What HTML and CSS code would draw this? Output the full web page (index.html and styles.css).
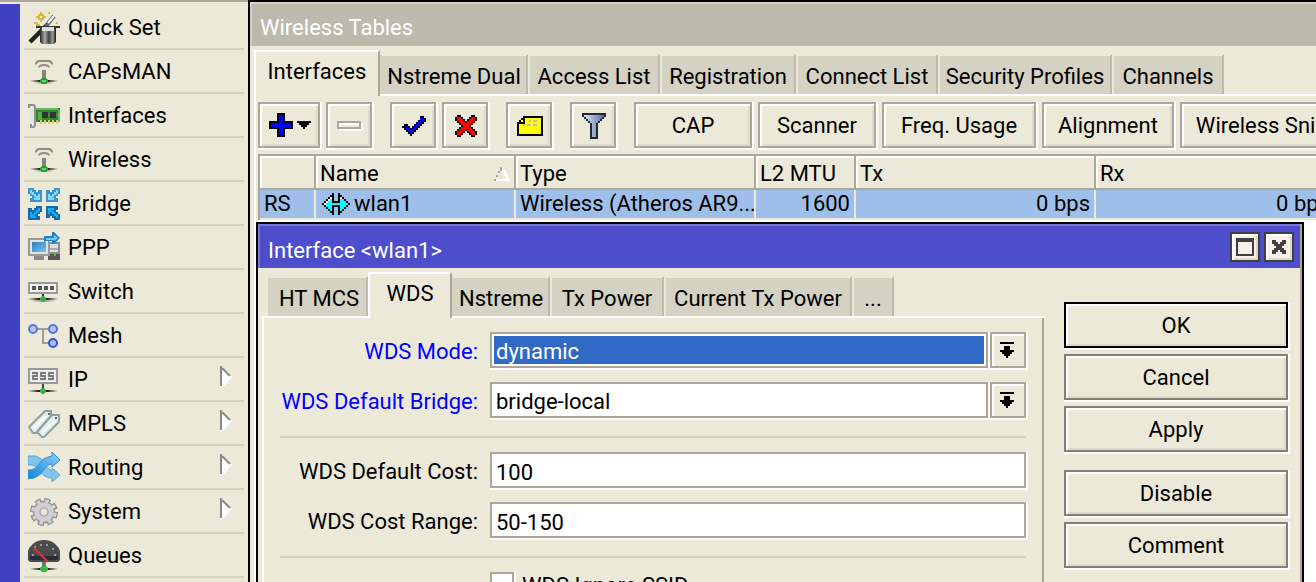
FILE: index.html
```html
<!DOCTYPE html>
<html lang="en">
<head>
<meta charset="utf-8">
<title>Wireless Tables</title>
<link rel="stylesheet" href="styles.css">
</head>
<body>
<svg class="defs" width="0" height="0" aria-hidden="true">
  <defs>
    <linearGradient id="screen" x1="0" y1="0" x2="1" y2="1"><stop offset="0" stop-color="#2a7fc4"/><stop offset="1" stop-color="#7cc0f0"/></linearGradient>
    <linearGradient id="steel" x1="0" y1="0" x2="1" y2="0"><stop offset="0" stop-color="#222"/><stop offset=".3" stop-color="#aaa"/><stop offset=".55" stop-color="#444"/><stop offset=".8" stop-color="#999"/><stop offset="1" stop-color="#111"/></linearGradient>
    <linearGradient id="fade" x1="0" y1="0" x2="1" y2="0"><stop offset="0" stop-color="#222" stop-opacity="0"/><stop offset=".35" stop-color="#222"/><stop offset=".65" stop-color="#222"/><stop offset="1" stop-color="#222" stop-opacity="0"/></linearGradient>
    <linearGradient id="funnel" x1="0" y1="0" x2="1" y2="0"><stop offset="0" stop-color="#dde4f4"/><stop offset="1" stop-color="#5c6c9c"/></linearGradient>
    <linearGradient id="sky" x1="0" y1="1" x2="1" y2="0"><stop offset="0" stop-color="#0c86e0"/><stop offset="1" stop-color="#8cd0fa"/></linearGradient>
    <symbol id="i-antenna" viewBox="0 0 16 16"><path d="M4 4.200Q4 2.600 6 2.500H10Q12 2.600 12 4.200M5.500 5.800Q5.500 4.500 8 4.500T10.500 5.800" fill="none" stroke="#8e8c84"/><path d="M7 7h2v5H7z" fill="#85837b"/><path d="M1 12h14v1H1z" fill="url(#fade)"/><path d="M3 13h10v1H3z" fill="url(#fade)" opacity=".3"/><path d="M7 11h2l1 1v1l-1 1H7l-1-1v-1z" fill="#2c9a3a"/><path d="M7 12h2v1H7z" fill="#4be75a"/></symbol>
    <symbol id="i-arrow" viewBox="0 0 7 7"><path d="M0 0h3v1h1v1h1V1h2v6H1V5h1V4H1V3H0z" fill="#3f92cf"/><path d="M1 1h1v1h1v1h1v1h1V3h1v3H3V5h1L3 4 1 2.500z" fill="#7fdcff"/></symbol>
    <symbol id="i-arrow-deep" viewBox="0 0 7 7"><path d="M0 0h3v1h1v1h1V1h2v6H1V5h1V4H1V3H0z" fill="#176aa8"/><path d="M1 1h1v1h1v1h1v1h1V3h1v3H3V5h1L3 4 1 2.500z" fill="#16adf5"/></symbol>
    <symbol id="i-drop" viewBox="0 0 7 8"><path d="M0 0h7v1H0zM2 2h3v2h2v1H6v1H5v1H4v1H3V7H2V6H1V5H0V4h2z"/></symbol>
  </defs>
</svg>
<div class="desktop">
  <div class="rail"></div>
  <nav class="menu" aria-label="Main menu">
    <a class="item" href="#"><svg viewBox="0 0 16 16"><path d="M1 15 9 7" stroke="#222" stroke-width="2.200"/><path d="m9 7 4-5" stroke="#666" stroke-width="2.200"/><path d="m10 5.500 3-3.500" stroke="#fff"/><path d="M6 8h8v7l-1 1H7l-1-1z" fill="url(#steel)"/><path d="M4 7h12v1H4z" fill="#333"/><path d="M7 7.500h6v2H7z" fill="#ddd"/><path d="M6 0h1v1h1v1h1v1H8v1H7v1H6V4H5V3H4V2h1V1h1zM4 5h1v1h1v1H4V6H3V5zM10 0h1v1h-1zM14 5h1v1h-1z" fill="#d9b93b"/><path d="M6 2h1v1H6z" fill="#fff5a0"/></svg>Quick Set</a>
    <a class="item" href="#"><svg><use href="#i-antenna"/></svg>CAPsMAN</a>
    <a class="item" href="#"><svg viewBox="0 0 16 16"><path d="M0 2h3l1 1v10l-1 1H1V4H0z" fill="#8f8f8f"/><path d="M1 3h1v9H1zM2 3h1v10H2z" fill="#e4e4e4"/><path d="M4 4h12v7H4z" fill="#2d8b2d"/><path d="M4 4h11v1H4zM15 5h1v6h-1z" fill="#65b965"/><path d="M5 6h2v4H5z" fill="#55ad4e"/><path d="M7 6h3v3H7zM11 6h3v3h-3z" fill="#333"/><path d="M10 7h1v1h-1zM14 7h1v1h-1z" fill="#777"/><path d="M5 10h10v1H5z" fill="#247024"/><path d="M6 10h1v2H6zM8 10h1v2H8zM10 10h1v2h-1zM12 10h1v2h-1zM14 10h1v2h-1z" fill="#e8c66a"/></svg>Interfaces</a>
    <a class="item" href="#"><svg><use href="#i-antenna"/></svg>Wireless</a>
    <a class="item" href="#"><svg viewBox="0 0 16 16"><use href="#i-arrow" width="7" height="7"/><use href="#i-arrow" width="7" height="7" transform="translate(16 0) scale(-1 1)"/><use href="#i-arrow-deep" width="7" height="7" transform="translate(7 9) scale(-1 1)"/><use href="#i-arrow-deep" width="7" height="7" transform="translate(16 16) scale(-1 -1)"/></svg>Bridge</a>
    <a class="item" href="#"><svg viewBox="0 0 16 16"><path d="M11 5h5v9h-6V6z" fill="#8d8d8d"/><path d="M11 6h4v4h-4z" fill="#ddd"/><path d="M11 8h4v1h-4z" fill="#aaa"/><path d="M10 11h6v3h-6z" fill="#555"/><path d="M0 3h11v9H0z" fill="#999"/><path d="M1 4h9v7H1z" fill="#e4e4e4"/><path d="M2 5h7v5H2z" fill="url(#screen)"/><path d="M3 12h5v2H3z" fill="#8a8a8a"/><path d="M13 11h1v1h-1z" fill="#35d035"/><path d="M8 2h4V0h1l3 3-3 3h-1V4.500H9L8 5z" fill="#2581bd"/><path d="M9 3h4V1.500L15 3l-2 1.500V4H9z" fill="#70caff"/></svg>PPP</a>
    <a class="item" href="#"><svg viewBox="0 0 16 16"><path d="M0 3h15v6H0z" fill="#999"/><path d="M1 4h13v4H1z" fill="#f3f3f3"/><path d="M2 5h2v2H2zM5 5h2v2H5zM8 5h2v2H8zM11 5h2v2h-2z" fill="#555"/><path d="M7 9h1v2H7z" fill="#333"/><path d="M0 11h15v1H0z" fill="url(#fade)"/><path d="M1 12h13v1H1z" fill="url(#fade)" opacity=".3"/><path d="M7 10h1l1 1v1l-1 1H7l-1-1v-1z" fill="#35b345"/></svg>Switch</a>
    <a class="item" href="#"><svg viewBox="0 0 16 16"><path d="M4 4.500h6M7.500 4.500v7h3" stroke="#9f9d94" fill="none"/><g fill="#b3c6fa" stroke="#5777d6"><circle cx="2.500" cy="4.500" r="2"/><circle cx="12.500" cy="4.500" r="2"/></g><circle cx="12.500" cy="11.500" r="2" fill="#a5bcff" stroke="#3156cf"/></svg>Mesh</a>
    <a class="item" href="#"><svg viewBox="0 0 16 16"><path d="M0 2h15v8H0z" fill="#999"/><path d="M1 3h13v6H1z" fill="#eee"/><path d="M2 4.500h2.500V6h-2v1.500H5M9 4.500H6.500V6h2v1.500H6M13 4.500h-2.500V6h2v1.500H10" stroke="#777" stroke-width=".9" fill="none"/><path d="M7 10h1v2H7z" fill="#444"/><path d="M0 13h15v1H0z" fill="url(#fade)"/><path d="M7 12h1l1 1v1l-1 1H7l-1-1v-1z" fill="#35b345"/></svg>IP<svg class="more" viewBox="0 0 6 11"><path d="M0 0h1l5 5.500L1 11H0z" fill="#fff"/><path d="M0 0h1v10H0z" fill="#8b8980"/><path d="m1 1 4 4" stroke="#8b8980"/></svg></a>
    <a class="item" href="#"><svg viewBox="0 0 16 16"><g fill="#e2eeec" stroke="#8fa39d" stroke-linejoin="round"><path d="M.5 9.500 8.500 1.500H11.500V4L4 12.500 2.500 12.500z"/><path d="M4.500 12 12 3.500h3.500V7L8 14.500H7z"/></g><path d="m3 10 6-6M7.500 12l6-6" stroke="#fff"/><path d="M10 3h1M13.500 5h1" stroke="#667"/></svg>MPLS<svg class="more" viewBox="0 0 6 11"><path d="M0 0h1l5 5.500L1 11H0z" fill="#fff"/><path d="M0 0h1v10H0z" fill="#8b8980"/><path d="m1 1 4 4" stroke="#8b8980"/></svg></a>
    <a class="item" href="#"><svg viewBox="0 0 16 16"><path d="M0 2h4q3 1 4.500 4T12 9.500V8l4 3.500-4 3.500v-2Q8 13 6 9.500T0 6.500z" fill="#80c6ef" stroke="#5aa5d6" stroke-width=".5"/><path d="M0 9q4 0 5.500-3T12 2V0l4 4-4 3.500V6Q9.500 6 7.500 9.500T0 13.500z" fill="url(#sky)" stroke="#3f8fcb" stroke-width=".5"/></svg>Routing<svg class="more" viewBox="0 0 6 11"><path d="M0 0h1l5 5.500L1 11H0z" fill="#fff"/><path d="M0 0h1v10H0z" fill="#8b8980"/><path d="m1 1 4 4" stroke="#8b8980"/></svg></a>
    <a class="item" href="#"><svg viewBox="0 0 16 16"><circle cx="8" cy="8" r="5.800" fill="none" stroke="#8c8c8c" stroke-width="2.400" stroke-dasharray="2.900 1.655"/><circle cx="8" cy="8" r="3.700" fill="none" stroke="#999" stroke-width="4"/><circle cx="8" cy="8" r="5.600" fill="none" stroke="#d4d4d6" stroke-width="1.600" stroke-dasharray="1.700 2.698" stroke-dashoffset="-.5"/><circle cx="8" cy="8" r="3.600" fill="none" stroke="#d0d0d4" stroke-width="2.600"/></svg>System<svg class="more" viewBox="0 0 6 11"><path d="M0 0h1l5 5.500L1 11H0z" fill="#fff"/><path d="M0 0h1v10H0z" fill="#8b8980"/><path d="m1 1 4 4" stroke="#8b8980"/></svg></a>
    <a class="item" href="#"><svg viewBox="0 0 16 16"><path d="M0 10V6q0-2 3-4.500Q5 0 8 0t5 1.500Q16 4 16 6v4l-1 1H1z" fill="#4b4b4d"/><path d="M1 8h14v2H1z" fill="#2d2d36"/><path d="M6 2h1v1H6zM9 2h1v1H9zM3 3h1v1H3zM12 4h1v1h-1zM2 7h1v1H2zM13 7h1v1h-1z" fill="#999"/><path d="m3 4 7 7" stroke="#ef2b2b"/><path d="M7 11h2v2H7z" fill="#777"/><path d="M1 14h14v1H1z" fill="url(#fade)"/><path d="M7 13h2l1 1v1l-1 1H7l-1-1v-1z" fill="#36b945"/></svg>Queues</a>
  </nav>
  <main class="window">
    <h1 class="title muted">Wireless Tables</h1>
    <div class="frame">
      <div class="tabs" role="tablist">
        <button class="tab active" role="tab">Interfaces</button><button class="tab" role="tab">Nstreme Dual</button><button class="tab" role="tab">Access List</button><button class="tab" role="tab">Registration</button><button class="tab" role="tab">Connect List</button><button class="tab" role="tab">Security Profiles</button><button class="tab" role="tab">Channels</button>
      </div>
      <div class="toolbar">
        <button class="btn add" aria-label="Add"><svg width="42" height="24" viewBox="0 0 21 12"><path d="M4 0h4v4h4v4H8v4H4V8H0V4h4z"/><path d="M5 1h2v4h4v2H7v4H5V7H1V5h4z" fill="#00f"/><path d="M14 4h7v1h-1v1h-1v1h-1v1h-1V7h-1V6h-1V5h-1z"/></svg></button>
        <button class="btn tool" aria-label="Remove"><svg width="26" height="10" viewBox="0 0 13 5"><path d="M1 1h12v4H1z" fill="#fff"/><path d="M0 0h12v4H0z" fill="#aca899"/><path d="M1 1h10v2H1z" fill="#fff"/><path d="M2 2h9v1H2z" fill="#ece9d8"/></svg></button>
        <button class="btn tool apart" aria-label="Enable"><svg width="24" height="20" viewBox="0 0 12 10"><path d="M9 0h2v1h1v2h-1v1h-1v1H9v1H8v1H7v1H6v1H5v1H4V9H3V8H2V7H1V6H0V5h1V4h2v1h1v1h1V5h1V4h1V3h1V2h1z"/><path d="M9 1h2v2h-1v1H9v1H8v1H7v1H6v1H5v1H4V8H3V7H2V5h1v1h1v1h1V6h1V5h1V4h1V3h1z" fill="#00f"/></svg></button>
        <button class="btn tool" aria-label="Disable"><svg width="22" height="22" viewBox="0 0 11 11"><path d="M1 0h2v1h1v1h1v1h1V2h1V1h1V0h2v1h1v2h-1v1H9v1H8v1h1v1h1v1h1v2h-1v1H8v-1H7V9H6V8H5v1H4v1H3v1H1v-1H0V8h1V7h1V6h1V5H2V4H1V3H0V1h1z"/><path d="M1 1h2v1h1v1h1v1h1V3h1V2h1V1h2v2H9v1H8v1H7v1h1v1h1v1h1v2H8V9H7V8H6V7H5v1H4v1H3v1H1V8h1V7h1V6h1V5H3V4H2V3H1z" fill="#f00"/></svg></button>
        <button class="btn tool apart" aria-label="Comment"><svg width="26" height="20" viewBox="0 0 13 10"><path d="M3 0h10v10H0V3h1V2h1V1h1z"/><path d="M4 1h8v8H1V4h3z" fill="#ff0"/><path d="M2 2h1v1H2z" fill="#ff0"/><path d="M6 2h1v1H6zM8 2h2v1H8zM3 4h1v1H3zM5 4h2v1H5zM8 4h2v1H8z" fill="#c0c0c0"/></svg></button>
        <button class="btn tool apart" aria-label="Filter"><svg width="24" height="26" viewBox="0 0 12 13"><path d="M0 0h12v2h-1v1h-1v1H9v1H8v8H4V5H3V4H2V3H1V2H0z" fill="#222838"/><path d="M1 1h10v1h-1v1H9v1H8v1H7v7H5V5H4V4H3V3H2V2H1z" fill="url(#funnel)"/></svg></button>
        <button class="btn word apart">CAP</button>
        <button class="btn word">Scanner</button>
        <button class="btn word long">Freq. Usage</button>
        <button class="btn word">Alignment</button>
        <button class="btn word">Wireless Sniffer</button>
      </div>
      <div class="sheet">
        <table class="grid">
          <colgroup><col class="c-flag"><col class="c-name"><col class="c-type"><col class="c-mtu"><col class="c-rate"><col class="c-rate"></colgroup>
          <thead><tr><th aria-label="Flags"></th><th><span class="sorted">Name<svg width="16" height="14" viewBox="0 0 8 7"><path d="M0 6.500h8M4.500 0v2h1v2h1v2h1v1" stroke="#fff" fill="none"/><path d="M4 0H3v2H2v2H1v2H0v1h1V5h1V3h1V2h1z" fill="#aca899"/></svg></span></th><th>Type</th><th>L2 MTU</th><th>Tx</th><th>Rx</th></tr></thead>
          <tbody><tr><td>RS</td><td><span class="iface"><svg width="28" height="22" viewBox="0 0 14 11"><path d="M5 0h1v4h2V0h1v1h1v1h1v1h1v1h1v1h1v1h-1v1h-1v1h-1v1h-1v1H9v1H8V7H6v4H5v-1H4V9H3V8H2V7H1V6H0V5h1V4h1V3h1V2h1V1h1z"/><path d="M4 3h1v2h4V2h1v1h1v1h1v1h1v1h-1v1h-1v1h-1v1H9V6H5v3H4V8H3V7H2V5h1V4h1z" fill="#0ff"/><path d="M4 5h6v1H4z" fill="#0ff"/><path d="M1 5h1V4h1V3h1V2h1v1H4v1H3v1H2v1H1zM9 2h1v1H9z" fill="#fff"/></svg>wlan1</span></td><td>Wireless (Atheros AR9...</td><td class="num">1600</td><td class="num">0 bps</td><td class="num">0 bps</td></tr></tbody>
        </table>
      </div>
    </div>
    <section class="dialog" role="dialog" aria-labelledby="dialog-title">
      <header class="title bright"><h2 id="dialog-title">Interface &lt;wlan1&gt;</h2>
        <button class="btn win" aria-label="Maximize"><svg width="18" height="18" viewBox="0 0 9 9"><path d="M0 0h9v9H0zM1 2v6h7V2z" fill="#404040" fill-rule="evenodd"/></svg></button>
        <button class="btn win" aria-label="Close"><svg width="14" height="14" viewBox="0 0 7 7"><path d="M0 0h2v1h1v1h1V1h1V0h2v2H6v1H5v1h1v1h1v2H5V6H4V5H3v1H2v1H0V5h1V4h1V3H1V2H0z" fill="#404040"/></svg></button>
      </header>
      <div class="dialog-body">
        <div class="pane">
          <div class="tabs inner" role="tablist">
            <button class="tab" role="tab">HT MCS</button><button class="tab active" role="tab">WDS</button><button class="tab" role="tab">Nstreme</button><button class="tab" role="tab">Tx Power</button><button class="tab" role="tab">Current Tx Power</button><button class="tab" role="tab">...</button>
          </div>
          <form class="fields">
            <div class="field changed"><label for="mode">WDS Mode:</label><select id="mode" class="box selected"><option>dynamic</option></select><button type="button" class="btn drop" aria-label="Choose mode"><svg width="14" height="16"><use href="#i-drop"/></svg></button></div>
            <div class="field changed"><label for="bridge">WDS Default Bridge:</label><select id="bridge" class="box"><option>bridge-local</option></select><button type="button" class="btn drop" aria-label="Choose bridge"><svg width="14" height="16"><use href="#i-drop"/></svg></button></div>
            <hr>
            <div class="field"><label for="cost">WDS Default Cost:</label><input id="cost" class="box" value="100"></div>
            <div class="field"><label for="range">WDS Cost Range:</label><input id="range" class="box" value="50-150"></div>
            <hr>
            <div class="field check"><span></span><input type="checkbox" id="ssid"><label for="ssid">WDS Ignore SSID</label></div>
          </form>
        </div>
        <div class="actions">
          <button class="btn act default">OK</button>
          <button class="btn act">Cancel</button>
          <button class="btn act">Apply</button>
          <button class="btn act gap">Disable</button>
          <button class="btn act">Comment</button>
        </div>
      </div>
    </section>
  </main>
</div>
</body>
</html>
```
FILE: styles.css
```css
* { box-sizing: border-box; }

body {
  margin: 0;
  height: 100vh;
  overflow: hidden;
  background: #ece9d8;
  color: #000;
  font: 22px/28px Roboto, sans-serif;
}

button, input, select { font: inherit; color: inherit; border-radius: 0; margin: 0; }
h1, h2 { margin: 0; font: inherit; }
svg { display: block; flex: none; shape-rendering: crispEdges; }
.defs { position: absolute; }

.desktop { display: flex; height: 100vh; border-top: 2px solid #aca899; }
.rail { flex: none; width: 20px; margin-top: 2px; background: #3f3fbf; }

.menu { flex: none; width: 228px; padding: 4px 4px 0; }
.item {
  display: flex;
  align-items: center;
  gap: 8px;
  height: 44px;
  padding: 2px 0 0 4px;
  border-bottom: 2px solid #d6d2c2;
  color: inherit;
  text-decoration: none;
}
.item svg { width: 32px; height: 32px; shape-rendering: auto; }
.item .more { width: 12px; height: 22px; margin: 0 12px 6px auto; }

.window {
  position: relative;
  flex: 1;
  min-width: 0;
  margin-top: -2px;
  border-top: 2px solid #000;
  border-left: 2px solid #000;
  overflow: hidden;
}
.title { display: flex; align-items: center; height: 44px; padding: 6px 6px 0 8px; color: #fff; }
.muted { background: #bdb9ad; border-top: 2px solid #d4d0c4; border-left: 2px solid #d4d0c4; }
.bright { background: #4e4ecc; border-top: 2px solid #7878d4; border-left: 2px solid #7878d4; }

.frame { height: 100%; margin: 4px 0 0 4px; }
.frame > :not(.tabs) { border-left: 2px solid #fff; }

.tabs { display: flex; align-items: flex-end; height: 46px; background: linear-gradient(#fff, #fff) bottom / 100% 2px no-repeat; }
.tab {
  flex: none;
  height: 40px;
  margin-bottom: 2px;
  padding: 4px 0 0;
  border: 2px solid #ece9d8;
  border-bottom: 0;
  border-right-color: #bdb9ad;
  background: #d4d2c3;
  white-space: nowrap;
}
.tab.active {
  height: 46px;
  margin-bottom: 0;
  padding: 0 0 4px;
  border-color: #fff;
  border-right-color: #aca899;
  background: #ece9d8;
}
.tab.active + .tab { border-left-color: #d4d2c3; }
.frame .tab:nth-child(1) { width: 126px; }
.frame .tab:nth-child(2) { width: 148px; }
.frame .tab:nth-child(3) { width: 132px; }
.frame .tab:nth-child(4) { width: 136px; }
.frame .tab:nth-child(5) { width: 142px; }
.frame .tab:nth-child(6) { width: 174px; }
.frame .tab:nth-child(7) { width: 112px; }

.btn {
  display: flex;
  flex: none;
  align-items: center;
  justify-content: center;
  height: 46px;
  padding: 0;
  border: 2px solid #aca899;
  background: #ece9d8;
  box-shadow: inset 2px 2px #fff, inset -2px -2px #dfdbcb, 2px 0 #fff, 0 2px #fff, 2px 2px #fff;
  white-space: nowrap;
}
.toolbar { display: flex; gap: 6px; padding: 6px 0 6px 2px; }
.add { width: 62px; padding-left: 2px; }
.tool { width: 46px; padding: 2px 0 0 2px; }
.apart { margin-left: 12px; }
.word { min-width: 118px; padding: 2px 14px 0; }
.long { min-width: 154px; }

.sheet { height: 100%; padding-left: 2px; background: linear-gradient(90deg, #ece9d8 2px, #fff 2px); }
.grid { width: 1078px; border-collapse: separate; border-spacing: 0; table-layout: fixed; border: 0 solid #aca899; border-width: 2px 0 0 2px; }
.c-flag { width: 56px; }
.c-name { width: 200px; }
.c-type { width: 240px; }
.c-mtu { width: 100px; }
.c-rate { width: 240px; }
.grid th, .grid td { padding: 0 4px; text-align: left; font-weight: normal; white-space: nowrap; overflow: hidden; border-right: 2px solid #ece9d8; }
.grid th { height: 34px; padding-top: 4px; border-right-color: #aca899; border-bottom: 2px solid #aca899; background: #ece9d8; box-shadow: inset 2px 2px #fff; }
.grid td { height: 30px; background: #9dbfea; border-bottom: 2px solid #ece9d8; }
.grid .num { text-align: right; }
.sorted { display: flex; align-items: center; justify-content: space-between; }
.iface { display: flex; align-items: center; gap: 4px; padding-left: 2px; }

.dialog {
  position: absolute;
  top: 220px;
  left: 6px;
  right: 12px;
  height: 480px;
  border: 2px solid #000;
  background: #ece9d8;
  box-shadow: inset -2px 0 #aca899;
}
.bright { margin-right: 2px; gap: 4px; padding-top: 0; }
.bright h2 { flex: 1; padding-top: 8px; }
.win { width: 30px; height: 30px; border-color: #404040; background: #f7f0e8; box-shadow: inset 2px 2px #fff, inset -2px -2px #dfd9cc; }
.dialog-body { display: flex; gap: 20px; padding: 4px 14px 0 4px; }
.pane { flex: 1; min-width: 0; }
.inner { padding-left: 4px; }
.inner .tab:nth-child(1) { width: 102px; padding-left: 4px; }
.inner .tab:nth-child(2) { width: 84px; }
.inner .tab:nth-child(3) { width: 98px; }
.inner .tab:nth-child(4) { width: 114px; }
.inner .tab:nth-child(5) { width: 188px; }
.inner .tab:nth-child(6) { width: 42px; }

.fields { height: 400px; padding: 14px 16px 0; border: solid #fff; border-width: 0 2px; border-right-color: #aca899; }
.field { display: flex; gap: 2px; margin-bottom: 14px; }
.field > label:first-child { width: 198px; margin-right: 10px; padding-top: 6px; text-align: right; white-space: nowrap; }
.changed label { color: #00f; }
.box {
  flex: 1;
  min-width: 0;
  height: 36px;
  padding: 4px 4px 0;
  border: 2px solid #aca899;
  outline: 0;
  background: #fff;
  box-shadow: 2px 0 #fff, 0 2px #fff, 2px 2px #fff;
  appearance: none;
}
.selected { background: #316ac5; color: #fff; box-shadow: inset 0 0 0 2px #fff, 2px 0 #fff, 0 2px #fff; }
.drop { width: 36px; height: 36px; box-shadow: inset 2px 2px #fff, 2px 0 #fff, 0 2px #fff, 2px 2px #fff; }
.drop svg { margin-right: 2px; }
hr { height: 2px; margin: 18px 0 14px; border: 0; background: #d6d2c2; }
.check { gap: 8px; }
.check span { width: 202px; }
.check input { width: 24px; height: 24px; appearance: none; border: 2px solid #aca899; background: #fff; box-shadow: 2px 0 #fff, 0 2px #fff; }

.actions { display: grid; gap: 6px; align-content: start; width: 224px; padding-top: 30px; }
.act { width: 100%; padding-top: 2px; border-color: #838176; }
.default { border-color: #000; }
.act.gap { margin-top: 12px; }
```
